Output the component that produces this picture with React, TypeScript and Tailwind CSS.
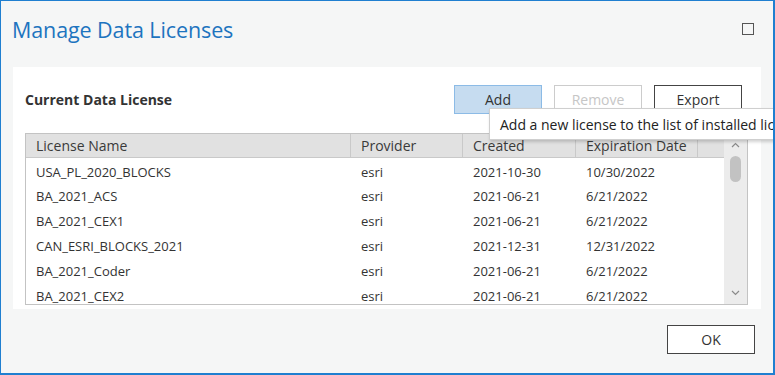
const rows = [
  { name: "USA_PL_2020_BLOCKS", provider: "esri", created: "2021-10-30", expires: "10/30/2022" },
  { name: "BA_2021_ACS", provider: "esri", created: "2021-06-21", expires: "6/21/2022" },
  { name: "BA_2021_CEX1", provider: "esri", created: "2021-06-21", expires: "6/21/2022" },
  { name: "CAN_ESRI_BLOCKS_2021", provider: "esri", created: "2021-12-31", expires: "12/31/2022" },
  { name: "BA_2021_Coder", provider: "esri", created: "2021-06-21", expires: "6/21/2022" },
  { name: "BA_2021_CEX2", provider: "esri", created: "2021-06-21", expires: "6/21/2022" },
];

function HeaderCell({ label, width }: { label: string; width: string }) {
  return (
    <div className={`${width} h-full flex items-center pl-[10px] border-r border-[#c9c9c9] shrink-0`}>
      {label}
    </div>
  );
}

function Scrollbar() {
  return (
    <div className="w-[23px] h-full bg-[#ececec] flex flex-col items-center shrink-0">
      <div className="h-[22px] flex items-center justify-center">
        <svg width="9" height="6" viewBox="0 0 9 6" fill="none" stroke="#8a8a8a" strokeWidth="1.2">
          <path d="M1 5 L4.5 1.5 L8 5" />
        </svg>
      </div>
      <div className="w-[11px] h-[26px] rounded-full bg-[#c2c2c2]" />
      <div className="flex-1" />
      <div className="h-[22px] flex items-center justify-center">
        <svg width="9" height="6" viewBox="0 0 9 6" fill="none" stroke="#8a8a8a" strokeWidth="1.2">
          <path d="M1 1 L4.5 4.5 L8 1" />
        </svg>
      </div>
    </div>
  );
}

export default function App() {
  return (
    <div
      className="relative w-[775px] h-[375px] overflow-hidden bg-[#f5f6f6] border-l border-t border-r-2 border-b-2 border-[#1f7fd0] flex flex-col text-[#333333]"
      style={{ fontFamily: '"Open Sans", "Noto Sans", sans-serif' }}
    >
      {/* title bar */}
      <div className="h-[66px] shrink-0 flex items-start justify-between pl-[11px] pr-[19px] pt-[15px]">
        <h1 className="text-[21.5px] leading-[28px] text-[#1d74bf] tracking-[-0.1px]">Manage Data Licenses</h1>
        <div className="mt-[7px] w-[12px] h-[12px] border-[1.5px] border-[#555555]" />
      </div>

      {/* content panel */}
      <div className="ml-[12px] w-[748px] h-[242px] bg-white flex flex-col shrink-0">
        <div className="flex items-center pt-[18px] pl-[12px] pr-[19px]">
          <div className="text-[14px] font-bold text-[#333333] flex-1">Current Data License</div>
          <div className="flex gap-[12px] text-[14px]">
            <button className="w-[88px] h-[29px] bg-[#c6dcf0] border border-[#8cbbe6] text-[#333333]">Add</button>
            <button className="w-[88px] h-[29px] bg-white border border-[#cccccc] text-[#c6c6c6]">Remove</button>
            <button className="w-[88px] h-[29px] bg-white border border-[#444444] text-[#333333]">Export</button>
          </div>
        </div>

        <div className="mt-[19px] ml-[12px] w-[723px] h-[172px] border border-[#c3c3c3] flex text-[13px]">
          <div className="flex-1 flex flex-col min-w-0">
            <div className="h-[24px] bg-[#e1e1e1] border-b border-[#c9c9c9] flex text-[14px] text-[#3a3a3a] shrink-0">
              <HeaderCell label="License Name" width="w-[325px]" />
              <HeaderCell label="Provider" width="w-[112px]" />
              <HeaderCell label="Created" width="w-[113px]" />
              <HeaderCell label="Expiration Date" width="w-[122px]" />
              <div className="flex-1" />
            </div>
            <div className="flex-1 overflow-hidden pt-[2px]">
              {rows.map((r, i) => (
                <div key={i} className="h-[24.8px] flex items-center">
                  <div className="w-[325px] pl-[10px] shrink-0">{r.name}</div>
                  <div className="w-[112px] pl-[10px] shrink-0">{r.provider}</div>
                  <div className="w-[113px] pl-[10px] shrink-0">{r.created}</div>
                  <div className="w-[122px] pl-[10px] shrink-0">{r.expires}</div>
                </div>
              ))}
            </div>
          </div>
          <Scrollbar />
        </div>
      </div>

      {/* footer */}
      <div className="flex justify-end pr-[18px] pt-[16px]">
        <button className="w-[88px] h-[29px] bg-white border border-[#444444] text-[14px] text-[#333333]">OK</button>
      </div>

      {/* tooltip */}
      <div className="absolute left-[488px] top-[107px] h-[32px] pl-[10px] pr-[8px] bg-white border border-[#cfcfcf] shadow-[1px_2px_3px_rgba(0,0,0,0.18)] flex items-center text-[14px] text-[#222222] whitespace-nowrap">
        Add a new license to the list of installed licenses
      </div>
    </div>
  );
}
